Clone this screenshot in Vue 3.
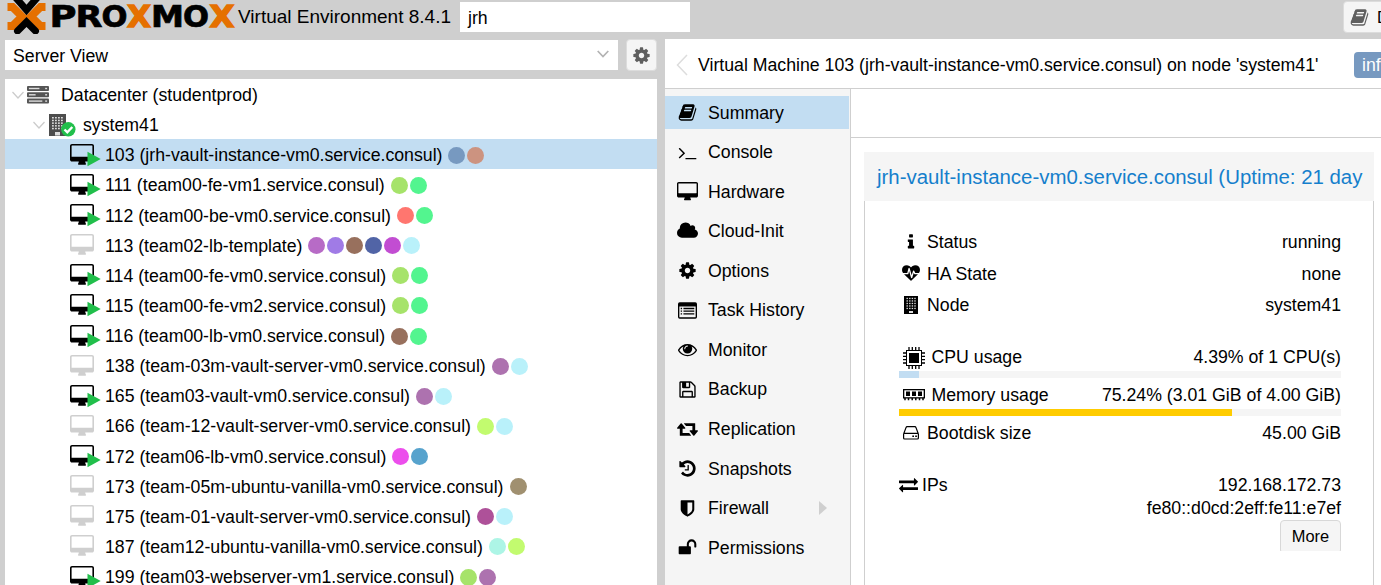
<script setup>
const icons = {
  book: { box: '0 0 1792 1792', d: 'M1703 478q40 57 18 129l-275 906q-19 64-76.5 107.5t-122.5 43.5h-923q-77 0-148.5-53.5t-99.5-131.5q-24-67-2-127 0-4 3-27t4-37q1-8-3-21.5t-3-19.5q2-11 8-21t16.5-23.5 16.5-23.5q23-38 45-91.5t30-91.5q3-10 .5-30t-.5-28q3-11 17-28t17-23q21-36 42-92t25-90q1-9-2.5-32t.5-28q4-13 22-30.5t22-22.5q19-26 42.5-84.5t27.5-96.5q1-8-3-25.5t-2-26.5q2-8 9-18t18-23 17-21q8-12 16.5-30.5t15-35 16-36 19.5-32 26.5-23.5 36-11.5 47.5 5.5l-1 3q38-9 51-9h761q74 0 114 56t18 130l-274 906q-36 119-71.5 153.5t-128.5 34.5h-869q-27 0-38 15-11 16-1 43 24 70 144 70h923q29 0 56-15.5t35-41.5l300-987q7-22 5-57 38 15 59 43zm-1064 2q-4 13 2 22.5t20 9.5h608q13 0 25.5-9.5t16.5-22.5l21-64q4-13-2-22.5t-20-9.5h-608q-13 0-25.5 9.5t-16.5 22.5zm-83 256q-4 13 2 22.5t20 9.5h608q13 0 25.5-9.5t16.5-22.5l21-64q4-13-2-22.5t-20-9.5h-608q-13 0-25.5 9.5t-16.5 22.5z' },
  cog: { box: '0 0 1792 1792', d: 'M1152 896q0-106-75-181t-181-75-181 75-75 181 75 181 181 75 181-75 75-181zm512-109v222q0 12-8 23t-20 13l-185 28q-19 54-39 91 35 50 107 138 10 12 10 25t-9 23q-27 37-99 108t-94 71q-12 0-26-9l-138-108q-44 23-91 38-16 136-29 186-7 28-36 28h-222q-14 0-24.5-8.5t-11.5-21.5l-28-184q-49-16-90-37l-141 107q-10 9-25 9-14 0-25-11-126-114-165-168-7-10-7-23 0-12 8-23 15-21 51-66.5t54-70.5q-27-50-41-99l-183-27q-13-2-21-12.5t-8-23.5v-222q0-12 8-23t19-13l186-28q14-46 39-92-40-57-107-138-10-12-10-24 0-10 9-23 26-36 98.5-107.5t94.5-71.5q13 0 26 10l138 107q44-23 91-38 16-136 29-186 7-28 36-28h222q14 0 24.5 8.5t11.5 21.5l28 184q49 16 90 37l142-107q9-9 24-9 13 0 25 10 129 119 165 170 7 8 7 22 0 12-8 23-15 21-51 66.5t-54 70.5q26 50 41 98l183 28q13 2 21 12.5t8 23.5z' },
  desktop: { box: '-64 0 1920 1792', d: 'M1728 992v-832q0-13-9.5-22.5t-22.5-9.5h-1600q-13 0-22.5 9.5t-9.5 22.5v832q0 13 9.5 22.5t22.5 9.5h1600q13 0 22.5-9.5t9.5-22.5zm128-832v1088q0 66-47 113t-113 47h-544q0 37 16 77.5t32 71 16 43.5q0 26-19 45t-45 19h-512q-26 0-45-19t-19-45q0-14 16-44t32-70 16-78h-544q-66 0-113-47t-47-113v-1088q0-66 47-113t113-47h1600q66 0 113 47t47 113z' },
  terminal: { box: '0 0 1792 1792', d: 'M649 983l-466 466q-10 10-23 10t-23-10l-50-50q-10-10-10-23t10-23l393-393-393-393q-10-10-10-23t10-23l50-50q10-10 23-10t23 10l466 466q10 10 10 23t-10 23zm1079 457v64q0 14-9 23t-23 9h-960q-14 0-23-9t-9-23v-64q0-14 9-23t23-9h960q14 0 23 9t9 23z' },
  cloud: { box: '-64 0 1920 1792', d: 'M1856 1152q0 159-112.5 271.5t-271.5 112.5h-1088q-185 0-316.5-131.5t-131.5-316.5q0-132 71-241.5t187-163.5q-2-28-2-43 0-212 150-362t362-150q158 0 286.5 88t187.5 230q70-62 166-62 106 0 181 75t75 181q0 75-41 138 129 30 213 134.5t84 239.5z' },
  list: { box: '0 0 1792 1792', d: 'M160 128h1472q160 0 160 160v1216q0 160-160 160h-1472q-160 0-160-160v-1216q0-160 160-160zM128 512v992q0 32 32 32h1472q32 0 32-32v-992zM256 640h128v128h-128zM512 640h1024v128h-1024zM256 896h128v128h-128zM512 896h1024v128h-1024zM256 1152h128v128h-128zM512 1152h1024v128h-1024z' },
  eye: { box: '0 0 1792 1792', d: 'M1664 960q-152-236-381-353 61 104 61 225 0 185-131.5 316.5t-316.5 131.5-316.5-131.5-131.5-316.5q0-121 61-225-229 117-381 353 133 205 333.5 326.5t434.5 121.5 434.5-121.5 333.5-326.5zm-720-384q0-20-14-34t-34-14q-125 0-214.5 89.5t-89.5 214.5q0 20 14 34t34 14 34-14 14-34q0-86 61-147t147-61q20 0 34-14t14-34zm848 384q0 34-20 69-140 230-376.5 368.5t-499.5 138.5-499.5-139-376.5-368q-20-35-20-69t20-69q140-229 376.5-368t499.5-139 499.5 139 376.5 368q20 35 20 69z' },
  floppy: { box: '0 0 1792 1792', d: 'M512 1536h768v-384h-768v384zm896 0h128v-896q0-14-10-38.5t-20-34.5l-281-281q-10-10-34-20t-39-10v416q0 40-28 68t-68 28h-576q-40 0-68-28t-28-68v-416h-128v1280h128v-416q0-40 28-68t68-28h832q40 0 68 28t28 68v416zm-384-928v-320q0-13-9.5-22.5t-22.5-9.5h-192q-13 0-22.5 9.5t-9.5 22.5v320q0 13 9.5 22.5t22.5 9.5h192q13 0 22.5-9.5t9.5-22.5zm640 32v928q0 40-28 68t-68 28h-1344q-40 0-68-28t-28-68v-1344q0-40 28-68t68-28h928q40 0 88 20t76 48l280 280q28 28 48 76t20 88z' },
  retweet: { box: '-64 0 1920 1792', d: 'M1216 1504q0 13-9.5 22.5t-22.5 9.5h-960q-8 0-13.5-2t-9-7-5.5-8-3-11.5-1-11.5v-600h-192q-26 0-45-19t-19-45q0-24 15-41l320-384q19-22 49-22t49 22l320 384q15 17 15 41 0 26-19 45t-45 19h-192v384h576q16 0 25 11l160 192q7 10 7 21zm640-416q0 24-15 41l-320 384q-20 23-49 23t-49-23l-320-384q-15-17-15-41 0-26 19-45t45-19h192v-384h-576q-16 0-25-12l-160-192q-7-9-7-20 0-13 9.5-22.5t22.5-9.5h960q8 0 13.5 2t9 7 5.5 8 3 11.5 1 11.5v600h192q26 0 45 19t19 45z' },
  history: { box: '0 0 1792 1792', d: 'M1664 896q0 156-61 298t-164 245-245 164-298 61q-172 0-327-72.5t-264-204.5q-7-10-6.5-22.5t8.5-20.5l137-138q10-9 25-9 16 2 23 12 73 95 179 147t225 52q104 0 198.5-40.5t163.5-109.5 109.5-163.5 40.5-198.5-40.5-198.5-109.5-163.5-163.5-109.5-198.5-40.5q-98 0-188 35.5t-160 101.5l137 138q31 30 14 69-17 40-59 40h-448q-26 0-45-19t-19-45v-448q0-42 40-59 39-17 69 14l130 129q107-101 244.5-156.5t284.5-55.5q156 0 298 61t245 164 164 245 61 298zm-640-288v448q0 14-9 23t-23 9h-320q-14 0-23-9t-9-23v-64q0-14 9-23t23-9h224v-352q0-14 9-23t23-9h64q14 0 23 9t9 23z' },
  shield: { box: '0 0 1792 1792', d: 'M1344 960v-640h-448v1137q119-63 213-137 235-184 235-360zm192-768v768q0 86-33.5 170.5t-83 150-118 127.5-126.5 103-121 77.5-89.5 49.5-42.5 20q-12 6-26 6t-26-6q-16-7-42.5-20t-89.5-49.5-121-77.5-126.5-103-118-127.5-83-150-33.5-170.5v-768q0-26 19-45t45-19h1152q26 0 45 19t19 45z' },
  unlock: { box: '0 0 1792 1792', d: 'M1728 576v256q0 26-19 45t-45 19h-64q-26 0-45-19t-19-45v-256q0-106-75-181t-181-75-181 75-75 181v192h96q40 0 68 28t28 68v576q0 40-28 68t-68 28h-960q-40 0-68-28t-28-68v-576q0-40 28-68t68-28h672v-192q0-185 131.5-316.5t316.5-131.5 316.5 131.5 131.5 316.5z' },
  info: { box: '0 0 1792 1792', d: 'M1216 1344v128q0 26-19 45t-45 19h-512q-26 0-45-19t-19-45v-128q0-26 19-45t45-19h64v-384h-64q-26 0-45-19t-19-45v-128q0-26 19-45t45-19h384q26 0 45 19t19 45v576h64q26 0 45 19t19 45zm-128-1152v192q0 26-19 45t-45 19h-256q-26 0-45-19t-19-45v-192q0-26 19-45t45-19h256q26 0 45 19t19 45z' },
  heartbeat: { box: '0 0 1792 1792', d: 'M1280 1024h305q-5 6-10 10.5t-9 7.5l-3 4-623 600q-18 18-44 18t-44-18l-624-602q-5-2-21-20h369q22 0 39.5-13.5t22.5-34.5l70-281 190 667q6 20 23 33t39 13q21 0 38-13t23-33l146-485 56 112q18 35 57 35zm512-428q0 145-103 300h-369l-111-221q-8-17-25.5-27t-36.5-8q-45 5-56 46l-129 430-196-686q-6-20-23.5-33t-39.5-13-39 13.5-22 34.5l-116 464h-423q-103-155-103-300 0-220 127-344t351-124q62 0 126.5 21.5t120 58 95.5 68.5 76 68q36-36 76-68t95.5-68.5 120-58 126.5-21.5q224 0 351 124t127 344z' },
  exchange: { box: '0 0 1792 1792', d: 'M1792 1184v192q0 13-9.5 22.5t-22.5 9.5h-1376v192q0 13-9.5 22.5t-22.5 9.5q-12 0-24-10l-319-320q-9-9-9-22 0-14 9-23l320-320q9-9 23-9 13 0 22.5 9.5t9.5 22.5v192h1376q13 0 22.5 9.5t9.5 22.5zm0-544q0 14-9 23l-320 320q-9 9-23 9-13 0-22.5-9.5t-9.5-22.5v-192h-1376q-13 0-22.5-9.5t-9.5-22.5v-192q0-13 9.5-22.5t22.5-9.5h1376v-192q0-14 9-23t23-9q12 0 24 10l319 319q9 9 9 23z' }
}

const windowCells = []
for (let r = 0; r < 5; r++) {
  for (let c = 0; c < 4; c++) windowCells.push({ x: 3 + c * 3, y: 3 + r * 2.7 })
}

const vms = [
  { n: '103 (jrh-vault-instance-vm0.service.consul)', on: true, sel: true, tags: ['#7799c0', '#cc9380'] },
  { n: '111 (team00-fe-vm1.service.consul)', on: true, tags: ['#a6e36a', '#53f58f'] },
  { n: '112 (team00-be-vm0.service.consul)', on: true, tags: ['#ff766f', '#53f58f'] },
  { n: '113 (team02-lb-template)', tags: ['#b76bc6', '#a07be6', '#98705d', '#5164a6', '#c24dd2', '#b9f1fa'] },
  { n: '114 (team00-fe-vm0.service.consul)', on: true, tags: ['#a6e36a', '#53f58f'] },
  { n: '115 (team00-fe-vm2.service.consul)', on: true, tags: ['#a6e36a', '#53f58f'] },
  { n: '116 (team00-lb-vm0.service.consul)', on: true, tags: ['#98705d', '#53f58f'] },
  { n: '138 (team-03m-vault-server-vm0.service.consul)', tags: ['#ad72af', '#b9f1fa'] },
  { n: '165 (team03-vault-vm0.service.consul)', on: true, tags: ['#ad72af', '#b9f1fa'] },
  { n: '166 (team-12-vault-server-vm0.service.consul)', tags: ['#c2fb6f', '#b9f1fa'] },
  { n: '172 (team06-lb-vm0.service.consul)', on: true, tags: ['#ec4eec', '#57a3cd'] },
  { n: '173 (team-05m-ubuntu-vanilla-vm0.service.consul)', tags: ['#a09070'] },
  { n: '175 (team-01-vault-server-vm0.service.consul)', tags: ['#ae5199', '#b9f1fa'] },
  { n: '187 (team12-ubuntu-vanilla-vm0.service.consul)', tags: ['#adf5e6', '#c2fb6f'] },
  { n: '199 (team03-webserver-vm1.service.consul)', on: true, tags: ['#a6e36a', '#ad72af'] }
]

const menu = [
  ['Summary', 'book'], ['Console', 'terminal'], ['Hardware', 'desktop'], ['Cloud-Init', 'cloud'],
  ['Options', 'cog'], ['Task History', 'list'], ['Monitor', 'eye'], ['Backup', 'floppy'],
  ['Replication', 'retweet'], ['Snapshots', 'history'], ['Firewall', 'shield'], ['Permissions', 'unlock']
]
</script>

<template>
  <div class="page">
    <header class="top">
      <svg class="logo" width="230" height="34" viewBox="0 0 230 34">
        <g fill="none" stroke-width="7" stroke-linejoin="miter">
          <path class="orange-line" d="M.5 7H5.500L15 16.500L5.500 26H.5M38.500 7H33.500L24 16.500L33.500 26H38.500" />
          <path class="black-line" d="M9 -2L19.500 10L30 -2M10.500 31L19.500 22L28.500 31" />
        </g>
        <g class="word">
          <text x="42.500" y="27" textLength="27" lengthAdjust="spacingAndGlyphs">P</text>
          <text x="68.500" y="27" textLength="27" lengthAdjust="spacingAndGlyphs">R</text>
          <text x="94.500" y="27" textLength="26" lengthAdjust="spacingAndGlyphs">O</text>
          <text class="or" x="120" y="27" textLength="24" lengthAdjust="spacingAndGlyphs">X</text>
          <text x="144" y="27" textLength="33" lengthAdjust="spacingAndGlyphs">M</text>
          <text x="176" y="27" textLength="26" lengthAdjust="spacingAndGlyphs">O</text>
          <text class="or" x="202.500" y="27" textLength="25" lengthAdjust="spacingAndGlyphs">X</text>
        </g>
      </svg>
      <span class="ver">Virtual Environment 8.4.1</span>
      <div class="search">jrh</div>
      <div class="docs">
        <svg width="19" height="19" :viewBox="icons.book.box"><path :d="icons.book.d" /></svg>
        <span>D</span>
      </div>
    </header>
    <div class="main">
      <aside class="left">
        <div class="viewbar">
          <div class="combo">
            <span>Server View</span>
            <svg width="12" height="8" viewBox="0 0 12 8"><path d="M.7 1L6 6.500L11.300 1" fill="none" stroke="#b3b3b3" stroke-width="1.700" /></svg>
          </div>
          <div class="gear"><svg width="19" height="19" :viewBox="icons.cog.box"><path :d="icons.cog.d" /></svg></div>
        </div>
        <div class="tree">
          <div class="row dc">
            <svg class="chev" width="12" height="8" viewBox="0 0 12 8"><path d="M.5 1L6 7L11.500 1" /></svg>
            <svg class="server" width="22" height="18" viewBox="0 0 23 18" preserveAspectRatio="none">
              <g fill="#555"><rect width="23" height="5" rx="1" /><rect y="6.300" width="23" height="5" rx="1" /><rect y="12.600" width="23" height="5" rx="1" /></g>
              <g fill="#ddd"><rect x="2" y="1.800" width="11" height="1.400" /><rect x="2" y="8.100" width="7" height="1.400" /><rect x="2" y="14.400" width="14" height="1.400" /><rect x="19" y="1.800" width="2" height="1.400" /><rect x="19" y="8.100" width="2" height="1.400" /><rect x="19" y="14.400" width="2" height="1.400" /></g>
            </svg>
            <span class="t">Datacenter (studentprod)</span>
          </div>
          <div class="row node">
            <svg class="chev" width="12" height="8" viewBox="0 0 12 8"><path d="M.5 1L6 7L11.500 1" /></svg>
            <svg class="host" width="28" height="23" viewBox="0 0 28 23">
              <rect width="17" height="22" fill="#4d4d4d" />
              <rect v-for="(w, i) in windowCells" :key="i" :x="w.x" :y="w.y" width="1.800" height="1.500" fill="#ddd" />
              <rect x="6" y="18" width="5" height="3.500" fill="#ddd" />
              <circle cx="19.300" cy="15.300" r="7.200" fill="#21bf4b" />
              <path d="M15.500 15.500L18.300 18.300L23.300 13" fill="none" stroke="#fff" stroke-width="2.400" />
            </svg>
            <span class="t">system41</span>
          </div>
          <div v-for="vm in vms" :key="vm.n" class="row vm" :class="{ sel: vm.sel }">
            <svg class="vmicon" :class="{ off: !vm.on }" width="31" height="24" viewBox="0 0 31 24">
              <svg x="0" y="1" width="24" height="22.400" :viewBox="icons.desktop.box"><path :d="icons.desktop.d" /></svg>
              <path v-if="vm.on" d="M17.500 8.700L30.700 16L17.500 23.300Z" fill="#21bf4b" />
            </svg>
            <span class="vmname t">{{ vm.n }}</span>
            <i v-for="(t, i) in vm.tags" :key="i" class="dot" :style="{ background: t }"></i>
          </div>
        </div>
      </aside>
      <section class="right">
        <div class="titlebar">
          <svg class="back" width="12" height="22" viewBox="0 0 12 22"><path d="M11 1L1.500 11L11 21" fill="none" stroke="#ddd" stroke-width="1.500" /></svg>
          <span class="vmtitle t">Virtual Machine 103 (jrh-vault-instance-vm0.service.consul) on node 'system41'</span>
          <span class="tag">inf</span>
        </div>
        <div class="content">
          <nav class="menu">
            <div v-for="(m, i) in menu" :key="m[0]" class="item" :class="{ active: i === 0 }">
              <span class="mi"><svg :class="{ wide: icons[m[1]].box[0] === '-' }" :viewBox="icons[m[1]].box"><path fill-rule="evenodd" :d="icons[m[1]].d" /></svg></span>
              <span class="mt">{{ m[0] }}</span>
              <svg v-if="m[0] === 'Firewall'" class="more-arrow" width="8" height="14" viewBox="0 0 8 14"><path d="M0 0L8 7L0 14Z" fill="#cfcfcf" /></svg>
            </div>
          </nav>
          <div class="pane">
            <div class="toolbar"></div>
            <div class="card">
              <div class="cardhead">jrh-vault-instance-vm0.service.consul (Uptime: 21 day</div>
              <div class="stats">
                <div class="stat"><span class="si"><svg width="18" height="18" :viewBox="icons.info.box"><path :d="icons.info.d" /></svg></span><span class="t">Status</span><b class="t">running</b></div>
                <div class="stat"><span class="si"><svg width="18" height="18" :viewBox="icons.heartbeat.box"><path :d="icons.heartbeat.d" /></svg></span><span class="t">HA State</span><b class="t">none</b></div>
                <div class="stat">
                  <span class="si"><svg width="14" height="18" viewBox="0 0 14 18"><rect width="14" height="18" /><g fill="#ddd"><template v-for="r in 5" :key="r"><rect v-for="c in 4" :key="c" :x="c * 2.600 - .1" :y="r * 2.500 - .7" width="1.400" height="1.300" /></template><rect x="5" y="15" width="4" height="2" /></g></svg></span>
                  <span class="t">Node</span><b class="t">system41</b>
                </div>
                <div class="stat cpu">
                  <svg class="lg" width="22" height="22" viewBox="0 0 22 22">
                    <rect x="3.500" y="3.500" width="15" height="15" fill="none" stroke="#000" /><rect x="6" y="6" width="10" height="10" />
                    <path d="M6 0V3M9.300 0V3M12.700 0V3M16 0V3M6 19V22M9.300 19V22M12.700 19V22M16 19V22M0 6H3M0 9.300H3M0 12.700H3M0 16H3M19 6H22M19 9.300H22M19 12.700H22M19 16H22" stroke="#000" stroke-width="1.300" />
                  </svg>
                  <span>CPU usage</span><b>4.39% of 1 CPU(s)</b>
                </div>
                <div class="bar"><div class="fill low" :style="{ width: '4.5%' }"></div></div>
                <div class="stat mem">
                  <svg class="lg" width="22" height="12" viewBox="0 0 22 12">
                    <rect x=".65" y=".65" width="20.700" height="8.200" fill="none" stroke="#000" stroke-width="1.300" />
                    <path d="M3 2.500H7V7H3ZM9 2.500H13V7H9ZM15 2.500H19V7H15Z" /><path d="M2 9V11.300M5.500 9V11.300M9.200 9V11.300M12.800 9V11.300M16.500 9V11.300M20 9V11.300" stroke="#000" stroke-width="1.500" />
                  </svg>
                  <span class="t">Memory usage</span><b class="t">75.24% (3.01 GiB of 4.00 GiB)</b>
                </div>
                <div class="bar"><div class="fill warn" :style="{ width: '75.24%' }"></div></div>
                <div class="stat disk">
                  <span class="si"><svg width="16" height="14" viewBox="0 0 16 14"><path d="M.6 8V12Q.6 13 1.600 13H14.400Q15.400 13 15.400 12V8Q15.400 7.300 14.400 7.300H1.600Q.6 7.300 .6 8L3 1.600Q3.300 .7 4.200 .7H11.800Q12.700 .7 13 1.600L15.400 8" fill="none" stroke="#000" stroke-width="1.200" /><path d="M9.300 9.500H11V11H9.300ZM12.200 9.500H13.900V11H12.200Z" /></svg></span>
                  <span class="t">Bootdisk size</span><b class="t">45.00 GiB</b>
                </div>
                <div class="stat ips"><svg width="19" height="19" :viewBox="icons.exchange.box"><path :d="icons.exchange.d" /></svg><span class="t">IPs</span><b class="t">192.168.172.73</b></div>
                <div class="stat ip6"><b class="t">fe80::d0cd:2eff:fe11:e7ef</b></div>
                <div class="morewrap"><div class="more">More</div></div>
              </div>
            </div>
          </div>
        </div>
      </section>
    </div>
  </div>
</template>

<style>
html, body { margin: 0; overflow: hidden; }
</style>

<style scoped>
* { box-sizing: border-box; }
.page { width: 1381px; height: 585px; background: #cfcfcf; overflow: hidden; font-family: "Liberation Sans", Arial, sans-serif; font-size: 17.720px; line-height: 23px; color: #000; white-space: nowrap; display: flex; flex-direction: column; }
svg { flex: none; display: block; }
.t { padding-top: 2px; }
.top { height: 39px; flex: none; display: flex; align-items: flex-start; padding-left: 7px; }
.orange-line { stroke: #e57000; stroke-width: 8; }
.black-line { stroke: #000; stroke-linecap: round; }
.word { font: bold 30px "DejaVu Sans", sans-serif; fill: #000; stroke: #000; stroke-width: .7; }
.or { fill: #e57000; stroke: #e57000; stroke-width: 1.400; }
.ver { margin-left: 1px; width: 222px; flex: none; line-height: 34px; font-size: 19px; }
.search { width: 230px; flex: none; height: 30px; margin-top: 2px; background: #fff; padding-left: 8px; line-height: 32px; }
.docs { margin-left: 653px; margin-top: 1px; width: 120px; height: 32px; flex: none; background: #f5f5f5; border: 1px solid #dcdcdc; border-radius: 4px; display: flex; align-items: center; padding-left: 6px; gap: 8px; font-size: 16.400px; }
.docs svg, .gear svg { fill: #5f5f5f; }
.main { flex: 1; display: flex; min-height: 0; padding-left: 5px; gap: 8px; }
.left { width: 652px; flex: none; display: flex; flex-direction: column; }
.viewbar { height: 40px; flex: none; display: flex; gap: 8px; }
.combo { width: 613px; height: 30px; margin-top: 1px; background: #fff; display: flex; align-items: center; justify-content: space-between; padding: 2px 9px 0 8px; }
.combo svg { margin-top: -4px; }
.gear { width: 31px; height: 32px; background: #f5f5f5; border: 1px solid #dcdcdc; border-radius: 4px; display: flex; align-items: center; justify-content: center; }
.tree { flex: 1; min-height: 0; background: #fff; overflow: hidden; }
.row { height: 30.140px; display: flex; align-items: center; padding-top: 1px; }
.chev path { fill: none; stroke: #ccc; stroke-width: 1.300; }
.dc { padding-left: 7px; }
.server { margin: 0 12px 0 3px; }
.node { padding-left: 28px; }
.host { margin: 2px 6px 0 4px; }
.vm { padding-left: 65px; }
.sel { background: #c2ddf2; }
.vmicon.off { fill: #cfcfcf; }
.vmname { margin: 0 6px 0 4px; }
.dot { width: 17px; height: 17px; border-radius: 50%; margin-right: 2px; margin-top: 1px; flex: none; }
.right { flex: 1; min-width: 0; display: flex; flex-direction: column; background: #fff; }
.titlebar { height: 50px; flex: none; border-bottom: 1px solid #cfcfcf; display: flex; align-items: center; padding: 2px 0 0 11px; overflow: hidden; }
.back { margin-right: 10px; }
.vmtitle { width: 656px; flex: none; }
.tag { background: #7799c0; color: #fff; border-radius: 4px; width: 60px; height: 26px; line-height: 26px; padding-left: 8px; flex: none; }
.content { flex: 1; display: flex; min-height: 0; }
.menu { width: 186px; flex: none; background: #f5f5f5; border-right: 1px solid #cfcfcf; padding-top: 7px; display: flex; flex-direction: column; gap: 6.570px; overflow: hidden; }
.item { height: 33px; width: 184px; display: flex; align-items: center; flex: none; padding-left: 11px; }
.mt { padding-top: 1px; }
.active { background: #c2ddf2; }
.mi { width: 22px; margin-right: 10px; display: flex; justify-content: center; }
.mi svg { width: 19px; height: 19px; }
.mi svg.wide { width: 21px; height: 19.600px; }
.more-arrow { margin-left: 50px; }
.pane { flex: 1; min-width: 0; display: flex; flex-direction: column; }
.toolbar { height: 49px; flex: none; border-bottom: 1px solid #cfcfcf; }
.card { margin: 14px 7px 0 13px; flex: 1; display: flex; flex-direction: column; min-height: 0; }
.cardhead { height: 49px; flex: none; background: #f5f5f5; padding-left: 13px; color: #157fcc; font-size: 20.420px; line-height: 50px; }
.stats { flex: 1; border: solid #cfcfcf; border-width: 0 1px; padding: 25px 32px 0 34px; min-height: 0; overflow: hidden; }
.stat { height: 31.500px; display: flex; align-items: center; }
.stat b { font-weight: normal; margin-left: auto; }
.si { width: 24px; margin-right: 4px; display: flex; justify-content: center; }
.lg { margin: 0 6.500px 0 4px; }
.cpu { margin-top: 24px; height: 26px; }
.bar { height: 7px; background: #f5f5f5; }
.fill { height: 7px; }
.low { background: #c2ddf2; }
.warn { background: #ffcc00; }
.mem { height: 26px; margin-top: 4px; margin-bottom: 1px; }
.disk { height: 26px; margin-top: 4px; }
.ips { height: 23px; margin-top: 27px; }
.ips svg { margin-right: 4px; }
.ip6 { height: 23px; }
.morewrap { height: 31px; margin-top: 1px; overflow: hidden; display: flex; justify-content: flex-end; }
.more { width: 61px; height: 34px; border: 1px solid #d8d8d8; border-radius: 4px; background: #f5f5f5; text-align: center; font-size: 16.400px; line-height: 31px; }
</style>
